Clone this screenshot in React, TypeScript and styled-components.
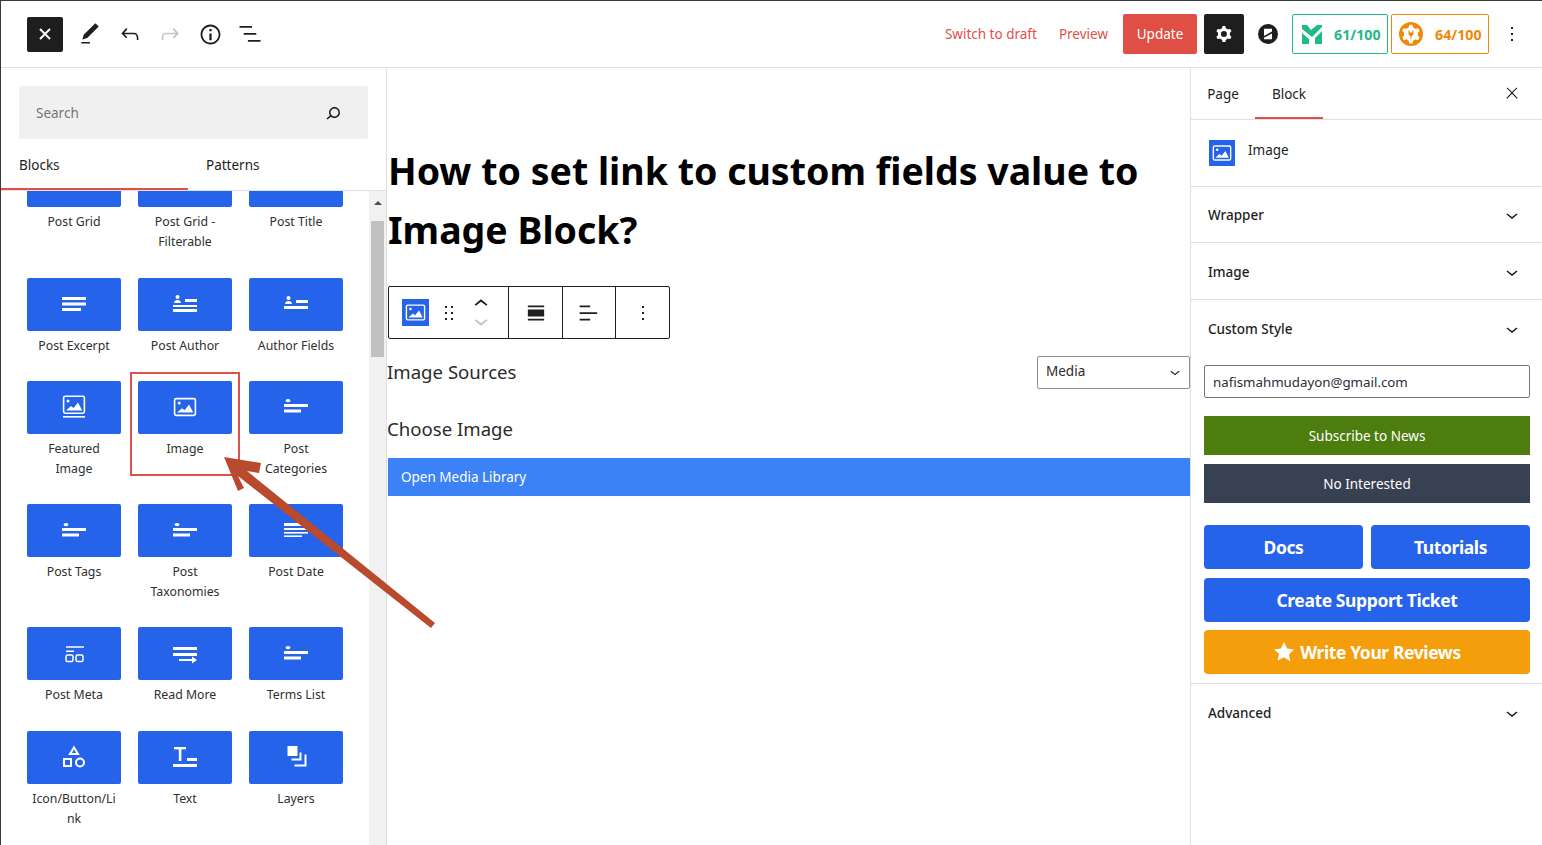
import React from 'react';
import styled, { createGlobalStyle } from 'styled-components';

const GlobalStyle = createGlobalStyle`
  html, body {
    margin: 0;
    padding: 0;
    background: #fff;
  }
  * {
    box-sizing: border-box;
  }
  body {
    font-family: "Noto Sans", "Open Sans", sans-serif;
    font-size: 13px;
    color: #1e1e1e;
  }
`;

const Page = styled.div`
  position: relative;
  width: 1542px;
  height: 845px;
  overflow: hidden;
  display: flex;
  flex-direction: column;
  border-top: 1px solid #343a40;
  border-left: 1px solid #343a40;
`;

const TopBar = styled.header`
  flex: 0 0 67px;
  display: flex;
  align-items: center;
  justify-content: space-between;
  padding: 0 18px 0 26px;
  border-bottom: 1px solid #e0e0e0;
`;

const TopGroup = styled.div`
  display: flex;
  align-items: center;
`;

const CloseButton = styled.div`
  width: 36px;
  height: 35px;
  border-radius: 2px;
  background: #1e1e1e;
  color: #fff;
  display: flex;
  align-items: center;
  justify-content: center;
  margin-right: 7px;
`;

const ToolIcon = styled.div<{ $muted?: boolean }>`
  width: 40px;
  height: 36px;
  display: flex;
  align-items: center;
  justify-content: center;
  color: ${({ $muted }) => ($muted ? '#c4c4c4' : '#1e1e1e')};
`;

const TextLink = styled.span<{ $gap: number }>`
  font-size: 13.5px;
  color: #e0504a;
  margin-right: ${({ $gap }) => $gap}px;
`;

const UpdateButton = styled.div`
  width: 74px;
  height: 40px;
  border-radius: 2px;
  background: #e04f45;
  color: #fff;
  font-size: 13.5px;
  display: flex;
  align-items: center;
  justify-content: center;
  margin-right: 7px;
`;

const GearButton = styled.div`
  width: 40px;
  height: 40px;
  border-radius: 2px;
  background: #1e1e1e;
  color: #fff;
  display: flex;
  align-items: center;
  justify-content: center;
  margin-right: 14px;
`;

const LogoSlot = styled.div`
  width: 20px;
  height: 20px;
  margin-right: 14px;
  display: flex;
`;

const ScoreBox = styled.div<{ $color: string; $width: number; $left: number }>`
  width: ${({ $width }) => $width}px;
  height: 40px;
  border: 1px solid ${({ $color }) => $color};
  border-radius: 2px;
  color: ${({ $color }) => $color};
  font-size: 14.2px;
  font-weight: 700;
  display: flex;
  align-items: center;
  justify-content: space-between;
  padding: 0 6.5px 0 ${({ $left }) => $left}px;
  margin-right: 3px;
`;

const KebabSlot = styled.div`
  width: 24px;
  height: 24px;
  margin-left: 8px;
  color: #1e1e1e;
`;

const Body = styled.div`
  flex: 1;
  min-height: 0;
  display: flex;
`;

const Inserter = styled.aside`
  flex: 0 0 386px;
  display: flex;
  flex-direction: column;
  border-right: 1px solid #e0e0e0;
  min-height: 0;
`;

const SearchBox = styled.div`
  height: 53px;
  margin: 18px 18px 0 18px;
  padding: 0 23px 0 17px;
  border-radius: 2px;
  background: #f0f0f0;
  font-size: 13.5px;
  display: flex;
  align-items: center;
  justify-content: space-between;
  color: #1e1e1e;
`;

const Placeholder = styled.span`
  color: #757575;
`;

const InserterTabs = styled.div`
  flex: 0 0 52px;
  display: flex;
  border-bottom: 1px solid #e0e0e0;
`;

const InserterTab = styled.div<{ $active?: boolean }>`
  width: 187px;
  height: 51px;
  padding: 2px 18px 0;
  font-size: 13.5px;
  display: flex;
  align-items: center;
  border-bottom: 2px solid ${({ $active }) => ($active ? '#e0504a' : 'transparent')};
`;

const ScrollArea = styled.div`
  flex: 1;
  min-height: 0;
  display: flex;
  overflow: hidden;
`;

const BlockGrid = styled.div`
  flex: 1;
  display: grid;
  grid-template-columns: repeat(3, 94px);
  column-gap: 17px;
  row-gap: 25.3px;
  align-content: start;
  padding-left: 26px;
  margin-top: -36.75px;
`;

const BlockItem = styled.div`
  text-align: center;
  font-size: 12.3px;
  line-height: 20px;
  color: #2f2f2f;
  overflow-wrap: anywhere;
  padding: 0 4px;
`;

const BlockTile = styled.div`
  height: 53px;
  margin: 0 -4px 5px;
  border-radius: 2px;
  background: #2563eb;
  color: #fff;
  display: flex;
  align-items: center;
  justify-content: center;
`;

const ScrollTrack = styled.div`
  flex: 0 0 17px;
  background: #f1f1f1;
  padding: 0 2px;
`;

const ScrollArrow = styled.div`
  height: 17px;
  margin-top: 3px;
  display: flex;
  justify-content: center;
  align-items: center;
  &::before {
    content: '';
    border: 4px solid transparent;
    border-top: 0;
    border-bottom: 4px solid #505050;
  }
`;

const ScrollThumb = styled.div`
  height: 136px;
  margin-top: 10px;
  background: #c1c1c1;
`;

const Canvas = styled.main`
  flex: 1;
  min-width: 0;
  padding-top: 73px;
  display: flex;
  flex-direction: column;
  align-items: stretch;
  padding-left: 1px;
`;

const Title = styled.h1`
  margin: 0 0 27px;
  padding-right: 40px;
  font-size: 37.5px;
  font-weight: 700;
  line-height: 59px;
  color: #000;
`;

const BlockToolbar = styled.div`
  width: 282px;
  height: 53px;
  display: flex;
  border: 1px solid #1e1e1e;
  border-radius: 2px;
  margin-bottom: 17px;
`;

const ToolbarGroup = styled.div<{ $width: number }>`
  width: ${({ $width }) => $width}px;
  display: flex;
  align-items: center;
  justify-content: center;
  border-right: 1px solid #1e1e1e;
  &:last-child {
    border-right: 0;
  }
`;

const ImageTools = styled.div`
  width: 120px;
  padding-left: 13px;
  display: flex;
  align-items: center;
  gap: 8px;
  border-right: 1px solid #1e1e1e;
`;

const ImageChip = styled.div<{ $size: number }>`
  width: ${({ $size }) => $size}px;
  height: ${({ $size }) => $size}px;
  background: #2563eb;
  color: #fff;
  display: flex;
  align-items: center;
  justify-content: center;
  flex: none;
`;

const MoverStack = styled.div`
  display: flex;
  flex-direction: column;
  margin-left: -2px;
`;

const MoverIcon = styled.div<{ $muted?: boolean }>`
  height: 17px;
  display: flex;
  align-items: center;
  justify-content: center;
  color: ${({ $muted }) => ($muted ? '#c4c4c4' : '#1e1e1e')};
`;

const FieldRow = styled.div`
  display: flex;
  align-items: center;
  justify-content: space-between;
  height: 33px;
  font-size: 18.6px;
  line-height: 31px;
  color: #2b2b2b;
  margin-left: -1px;
`;

const FieldText = styled.span`
  padding-bottom: 2px;
`;

const SelectBox = styled.div`
  width: 153px;
  height: 33px;
  border: 1px solid #8c8f94;
  border-radius: 2px;
  padding: 0 4px 2px 8px;
  font-size: 13.5px;
  display: flex;
  align-items: center;
  justify-content: space-between;
`;

const FieldLabel = styled.div`
  font-size: 18.6px;
  line-height: 33px;
  margin: 23px 0 0 -1px;
  color: #2b2b2b;
`;

const MediaButton = styled.div`
  height: 38px;
  margin-top: 13px;
  padding-left: 13px;
  background: #3b82f6;
  color: #fff;
  font-size: 13.5px;
  display: flex;
  align-items: center;
`;

const Sidebar = styled.aside`
  flex: 0 0 352px;
  border-left: 1px solid #e0e0e0;
  display: flex;
  flex-direction: column;
`;

const SideTabs = styled.div`
  flex: 0 0 51px;
  display: flex;
  align-items: stretch;
  border-bottom: 1px solid #e0e0e0;
`;

const SideTab = styled.div<{ $active?: boolean; $width: number }>`
  width: ${({ $width }) => $width}px;
  height: 51px;
  font-size: 13.5px;
  padding-top: 2px;
  display: flex;
  align-items: center;
  justify-content: center;
  border-bottom: 2px solid ${({ $active }) => ($active ? '#e0504a' : 'transparent')};
`;

const SideClose = styled.div`
  margin-left: auto;
  margin-right: 21px;
  height: 50px;
  display: flex;
  align-items: center;
`;

const BlockCard = styled.div`
  height: 67px;
  padding: 20px 18px 0;
  display: flex;
  align-items: flex-start;
  gap: 13px;
  font-size: 13.5px;
  line-height: 20px;
  border-bottom: 1px solid #e0e0e0;
`;

const Panel = styled.div<{ $height: number; $open?: boolean }>`
  height: ${({ $height }) => $height}px;
  padding: 1px 18px 0 17px;
  display: flex;
  align-items: center;
  justify-content: space-between;
  font-size: 13.5px;
  font-weight: 500;
  border-bottom: ${({ $open }) => ($open ? '0' : '1px solid #e0e0e0')};
`;

const CustomStyle = styled.div`
  padding: 8px 12px 9px 13px;
  display: flex;
  flex-direction: column;
  border-bottom: 1px solid #e0e0e0;
`;

const EmailInput = styled.div`
  height: 33px;
  border: 1px solid #767676;
  border-radius: 2px;
  padding: 0 8px;
  font-size: 13.3px;
  color: #2c2c3a;
  display: flex;
  align-items: center;
  margin-bottom: 18px;
`;

const FlatButton = styled.div<{ $bg: string; $gap: number }>`
  height: 39px;
  background: ${({ $bg }) => $bg};
  color: #fff;
  font-size: 13.5px;
  display: flex;
  align-items: center;
  justify-content: center;
  margin-bottom: ${({ $gap }) => $gap}px;
`;

const LinkRow = styled.div`
  display: grid;
  grid-template-columns: 1fr 1fr;
  column-gap: 8px;
  margin-bottom: 9px;
`;

const LinkButton = styled.div<{ $bg: string; $gap?: number }>`
  height: 44px;
  border-radius: 4px;
  background: ${({ $bg }) => $bg};
  color: #fff;
  font-size: 17.5px;
  font-weight: 700;
  letter-spacing: -0.4px;
  display: flex;
  align-items: center;
  justify-content: center;
  gap: 5px;
  margin-bottom: ${({ $gap }) => $gap ?? 0}px;
`;

const HighlightBox = styled.div`
  position: absolute;
  left: 129px;
  top: 371px;
  width: 110px;
  height: 104px;
  border: 2px solid #e0504a;
  pointer-events: none;
`;

const EdgeMark = styled.div<{ $top: number; $height: number; $color: string }>`
  position: absolute;
  left: -1px;
  top: ${({ $top }) => $top}px;
  width: 1px;
  height: ${({ $height }) => $height}px;
  background: ${({ $color }) => $color};
`;

const ArrowOverlay = styled.svg`
  position: absolute;
  left: -1px;
  top: -1px;
  width: 1542px;
  height: 845px;
  pointer-events: none;
`;

type IconProps = { size?: number };

const WpIcon: React.FC<IconProps & { d: string; evenOdd?: boolean }> = ({ d, size = 24, evenOdd }) => (
  <svg width={size} height={size} viewBox="0 0 24 24" fill="currentColor">
    <path d={d} fillRule={evenOdd ? 'evenodd' : undefined} clipRule={evenOdd ? 'evenodd' : undefined} />
  </svg>
);

const paths = {
  close: 'M13 11.8l6.1-6.3-1-1-6.1 6.2-6.1-6.2-1 1 6.1 6.3-6.5 6.7 1 1 6.5-6.6 6.5 6.6 1-1z',
  pen: 'M20.1 5.1L16.9 2 6.2 12.7l-1.3 4.4 4.5-1.3L20.1 5.1zM4 20.8h8v-1.5H4v1.5z',
  undo: 'M18.3 11.7c-.6-.6-1.4-.9-2.3-.9H6.7l2.9-3.3-1.1-1-4.5 5L8.5 16l1-1-2.7-2.7H16c.5 0 .9.2 1.3.5 1 1 1 3.4 1 4.5v.3h1.5v-.2c0-1.5 0-4.3-1.5-5.7z',
  redo: 'M15.6 6.5l-1.1 1 2.9 3.3H8c-.9 0-1.7.3-2.3.9-1.4 1.5-1.4 4.2-1.4 5.6v.2h1.5v-.3c0-1.1 0-3.5 1-4.5.3-.3.7-.5 1.3-.5h9.2L14.5 15l1.1 1.1 4.6-4.6-4.6-5z',
  info: 'M12 3.2c-4.8 0-8.8 3.9-8.8 8.8 0 4.8 3.9 8.8 8.8 8.8 4.8 0 8.8-3.9 8.8-8.8 0-4.8-4-8.8-8.8-8.8zm0 16c-4 0-7.2-3.3-7.2-7.2C4.8 8 8 4.8 12 4.8s7.2 3.3 7.2 7.2c0 4-3.2 7.2-7.2 7.2zM11 17h2v-6h-2v6zm0-8h2V7h-2v2z',
  list: 'M13.8 5.2H3v1.5h10.8V5.2zm-3.6 12v1.5H21v-1.5H10.2zm7.2-6H6.6v1.5h10.8v-1.5z',
  search: 'M13.5 6C10.5 6 8 8.5 8 11.5c0 1.1.3 2.1.9 3l-3.4 3 1 1.1 3.4-2.9c1 .9 2.2 1.4 3.6 1.4 3 0 5.5-2.5 5.5-5.5C19 8.5 16.5 6 13.5 6zm0 9.5c-2.2 0-4-1.8-4-4s1.8-4 4-4 4 1.8 4 4-1.8 4-4 4z',
  kebab: 'M13 19h-2v-2h2v2zm0-6h-2v-2h2v2zm0-6h-2V5h2v2z',
  cog: 'M10.289 4.836A1 1 0 0111.275 4h1.306a1 1 0 01.987.836l.244 1.466c.787.26 1.503.679 2.108 1.218l1.393-.522a1 1 0 011.216.437l.653 1.13a1 1 0 01-.23 1.273l-1.148.944a6.025 6.025 0 010 2.435l1.149.946a1 1 0 01.23 1.272l-.653 1.13a1 1 0 01-1.216.437l-1.394-.522c-.605.54-1.32.958-2.108 1.218l-.244 1.466a1 1 0 01-.987.836h-1.306a1 1 0 01-.986-.836l-.244-1.466a5.995 5.995 0 01-2.108-1.218l-1.394.522a1 1 0 01-1.217-.436l-.653-1.131a1 1 0 01.23-1.272l1.149-.946a6.026 6.026 0 010-2.435l-1.148-.944a1 1 0 01-.23-1.272l.653-1.131a1 1 0 011.217-.437l1.393.522a5.994 5.994 0 012.108-1.218l.244-1.466zM14.929 12a3 3 0 11-6 0 3 3 0 016 0z',
  down: 'M17.5 11.6L12 16l-5.5-4.4.9-1.2L12 14l4.5-3.6 1 1.2z',
  up: 'M6.5 12.4L12 8l5.5 4.4-.9 1.2L12 10l-4.5 3.6-1-1.2z',
  drag: 'M8 7h2V5H8v2zm0 6h2v-2H8v2zm0 6h2v-2H8v2zm6-14v2h2V5h-2zm0 8h2v-2h-2v2zm0 6h2v-2h-2v2z',
  alignWide: 'M5 5.5h14V7H5V5.5zm0 11.5h14v1.5H5V17zm0-8h14v6H5V9z',
  alignLeft: 'M4 5.5h9V7H4V5.5zm0 5.75h15v1.5H4v-1.5zM4 17h9v1.5H4V17z',
};

const BoldCross = () => (
  <svg width="12" height="12" viewBox="0 0 12 12" fill="none" stroke="currentColor" strokeWidth="2">
    <path d="M1 1l10 10M11 1L1 11" />
  </svg>
);

// picture icon in the outlined style used by the block tiles
const PictureIcon: React.FC<IconProps> = ({ size = 24 }) => (
  <svg width={size} height={size} viewBox="0 0 24 24" fill="none">
    <rect x="1.6" y="3.6" width="20.8" height="16.8" rx="1.6" stroke="currentColor" strokeWidth="1.6" />
    <circle cx="6.2" cy="8" r="1.5" fill="currentColor" />
    <path d="M4 17.6l5-4.4 2.6 2 4.4-5.6 4.2 8z" fill="currentColor" />
  </svg>
);

const TileSvg: React.FC<{ children: React.ReactNode }> = ({ children }) => (
  <svg width="24" height="24" viewBox="0 0 24 24" fill="currentColor">
    {children}
  </svg>
);

const Bars: React.FC<{ rows: [number, number, number, number?][] }> = ({ rows }) => (
  <>
    {rows.map(([x, y, w, h = 2], i) => (
      <rect key={i} x={x} y={y} width={w} height={h} />
    ))}
  </>
);

const tileIcons: Record<string, React.ReactNode> = {
  excerpt: <TileSvg><Bars rows={[[0, 5, 24, 3], [0, 10.5, 24, 3], [0, 16, 19, 3]]} /></TileSvg>,
  author: (
    <TileSvg>
      <circle cx="4.5" cy="5" r="2" />
      <path d="M1 11c0-2 1.6-3 3.5-3S8 9 8 11z" />
      <Bars rows={[[12, 7, 12, 3], [0, 13, 24, 2], [0, 17, 24, 3]]} />
    </TileSvg>
  ),
  authorFields: (
    <TileSvg>
      <circle cx="4.5" cy="6" r="2" />
      <path d="M1 12c0-2 1.6-3 3.5-3S8 10 8 12z" />
      <Bars rows={[[12, 8, 12, 3], [0, 14, 24, 3]]} />
    </TileSvg>
  ),
  featured: (
    <svg width="24" height="24" viewBox="0 0 24 24" fill="none">
      <rect x="1.6" y="1.2" width="20.8" height="17" rx="1.6" stroke="currentColor" strokeWidth="1.6" />
      <circle cx="6" cy="6" r="1.5" fill="currentColor" />
      <path d="M4 15.4l5-4.4 2.6 2 4.4-5.6 4.2 8z" fill="currentColor" />
      <rect x="1" y="21" width="22" height="1.6" fill="currentColor" />
    </svg>
  ),
  image: <PictureIcon />,
  terms: (
    <TileSvg>
      <ellipse cx="4" cy="5.6" rx="2.5" ry="1.7" />
      <Bars rows={[[0, 9, 24, 3], [0, 14.5, 17, 3]]} />
    </TileSvg>
  ),
  date: (
    <TileSvg>
      <Bars rows={[[0, 4, 18, 3], [0, 9, 24, 2], [0, 13, 24, 1.6], [0, 16.4, 18, 1.6]]} />
    </TileSvg>
  ),
  meta: (
    <svg width="24" height="24" viewBox="0 0 24 24" fill="none" stroke="currentColor">
      <path d="M4 5h18M4 9.2h8" strokeWidth="1.4" />
      <rect x="4" y="13" width="7" height="6.5" rx="1.6" strokeWidth="1.5" />
      <rect x="14" y="13" width="7" height="6.5" rx="1.6" strokeWidth="1.5" />
    </svg>
  ),
  readMore: (
    <TileSvg>
      <Bars rows={[[0, 5, 24, 3], [0, 11, 24, 3], [6, 17, 15, 2]]} />
      <path d="M19 14.5l5 3.5-5 3.5z" />
    </TileSvg>
  ),
  shapes: (
    <svg width="24" height="24" viewBox="0 0 24 24" fill="none" stroke="currentColor" strokeWidth="2">
      <path d="M12 2.5l4 6.5H8z" />
      <rect x="2" y="14" width="7" height="7" />
      <circle cx="18" cy="17.5" r="4" />
    </svg>
  ),
  text: (
    <TileSvg>
      <Bars rows={[[1, 2, 12, 2.4], [5.8, 2, 2.6, 14], [14, 13, 10, 3], [0, 19, 24, 3]]} />
    </TileSvg>
  ),
  layers: (
    <svg width="24" height="24" viewBox="0 0 24 24" fill="none">
      <rect x="3.5" y="1" width="10" height="10" fill="currentColor" />
      <path d="M16.5 7.5v7h-9" stroke="currentColor" strokeWidth="2" />
      <path d="M21.5 9.5v11h-11" stroke="currentColor" strokeWidth="2" />
    </svg>
  ),
};

const blocks: { label: string; icon: keyof typeof tileIcons }[] = [
  { label: 'Post Grid', icon: 'excerpt' },
  { label: 'Post Grid - Filterable', icon: 'excerpt' },
  { label: 'Post Title', icon: 'excerpt' },
  { label: 'Post Excerpt', icon: 'excerpt' },
  { label: 'Post Author', icon: 'author' },
  { label: 'Author Fields', icon: 'authorFields' },
  { label: 'Featured Image', icon: 'featured' },
  { label: 'Image', icon: 'image' },
  { label: 'Post Categories', icon: 'terms' },
  { label: 'Post Tags', icon: 'terms' },
  { label: 'Post Taxonomies', icon: 'terms' },
  { label: 'Post Date', icon: 'date' },
  { label: 'Post Meta', icon: 'meta' },
  { label: 'Read More', icon: 'readMore' },
  { label: 'Terms List', icon: 'terms' },
  { label: 'Icon/Button/Link', icon: 'shapes' },
  { label: 'Text', icon: 'text' },
  { label: 'Layers', icon: 'layers' },
];

const BrandLogo = () => (
  <svg width="20" height="20" viewBox="0 0 20 20" fill="#fff">
    <circle cx="10" cy="10" r="10" fill="#1e1e1e" />
    <path d="M6 4.8h8v2.6L6 12z" />
    <path d="M14 9.5v5.7H6v-1.4z" />
  </svg>
);

const MonsterLogo = () => (
  <svg width="20" height="19" viewBox="0 0 20 19" fill="#1fb98a">
    <path d="M0 0h5l4 5 6-5h5v2L10 12 0 4z" />
    <path d="M0 8l7 6v5H0zM20 6v13h-7v-6z" />
  </svg>
);

const PluginLogo = () => (
  <svg width="24" height="24" viewBox="0 0 24 24">
    <circle cx="12" cy="12" r="12" fill="#f28705" />
    <path d={paths.cog} fill="#fff" transform="translate(-1.9 -1.8) scale(1.16)" />
    <circle cx="12" cy="12" r="5" fill="#fff" />
    <path d="M9.5 8.5v3c0 1.5 1 2.4 2 2.5v3h1v-3c1-.1 2-1 2-2.5v-3h-1.2v2h-2.6v-2z" fill="#f28705" />
  </svg>
);

const App: React.FC = () => {
  return (
    <>
      <GlobalStyle />
      <Page>
        <TopBar>
          <TopGroup>
            <CloseButton>
              <BoldCross />
            </CloseButton>
            <ToolIcon><WpIcon d={paths.pen} size={26} /></ToolIcon>
            <ToolIcon><WpIcon d={paths.undo} size={26} /></ToolIcon>
            <ToolIcon $muted><WpIcon d={paths.redo} size={26} /></ToolIcon>
            <ToolIcon><WpIcon d={paths.info} size={27} /></ToolIcon>
            <ToolIcon><WpIcon d={paths.list} size={28} /></ToolIcon>
          </TopGroup>
          <TopGroup>
            <TextLink $gap={22}>Switch to draft</TextLink>
            <TextLink $gap={15}>Preview</TextLink>
            <UpdateButton>Update</UpdateButton>
            <GearButton><WpIcon d={paths.cog} evenOdd /></GearButton>
            <LogoSlot><BrandLogo /></LogoSlot>
            <ScoreBox $color="#1fb98a" $width={96} $left={9}>
              <MonsterLogo />
              <span>61/100</span>
            </ScoreBox>
            <ScoreBox $color="#f28705" $width={98} $left={7}>
              <PluginLogo />
              <span>64/100</span>
            </ScoreBox>
            <KebabSlot><WpIcon d={paths.kebab} /></KebabSlot>
          </TopGroup>
        </TopBar>
        <Body>
          <Inserter>
            <SearchBox>
              <Placeholder>Search</Placeholder>
              <WpIcon d={paths.search} />
            </SearchBox>
            <InserterTabs>
              <InserterTab $active>Blocks</InserterTab>
              <InserterTab>Patterns</InserterTab>
            </InserterTabs>
            <ScrollArea>
              <BlockGrid>
                {blocks.map((block) => (
                  <BlockItem key={block.label}>
                    <BlockTile>{tileIcons[block.icon]}</BlockTile>
                    {block.label}
                  </BlockItem>
                ))}
              </BlockGrid>
              <ScrollTrack>
                <ScrollArrow />
                <ScrollThumb />
              </ScrollTrack>
            </ScrollArea>
          </Inserter>
          <Canvas>
            <Title>How to set link to custom fields value to Image Block?</Title>
            <BlockToolbar>
              <ImageTools>
                <ImageChip $size={27}><PictureIcon size={21} /></ImageChip>
                <WpIcon d={paths.drag} />
                <MoverStack>
                  <MoverIcon><WpIcon d={paths.up} size={28} /></MoverIcon>
                  <MoverIcon $muted><WpIcon d={paths.down} size={28} /></MoverIcon>
                </MoverStack>
              </ImageTools>
              <ToolbarGroup $width={54}><WpIcon d={paths.alignWide} size={28} /></ToolbarGroup>
              <ToolbarGroup $width={53}><WpIcon d={paths.alignLeft} size={28} /></ToolbarGroup>
              <ToolbarGroup $width={53}><WpIcon d={paths.kebab} /></ToolbarGroup>
            </BlockToolbar>
            <FieldRow>
              <FieldText>Image Sources</FieldText>
              <SelectBox>
                <span>Media</span>
                <WpIcon d={paths.down} size={20} />
              </SelectBox>
            </FieldRow>
            <FieldLabel>Choose Image</FieldLabel>
            <MediaButton>Open Media Library</MediaButton>
          </Canvas>
          <Sidebar>
            <SideTabs>
              <SideTab $width={64}>Page</SideTab>
              <SideTab $width={68} $active>Block</SideTab>
              <SideClose><WpIcon d={paths.close} size={18} /></SideClose>
            </SideTabs>
            <BlockCard>
              <ImageChip $size={26}><PictureIcon size={20} /></ImageChip>
              <span>Image</span>
            </BlockCard>
            <Panel $height={56}>Wrapper<WpIcon d={paths.down} /></Panel>
            <Panel $height={57}>Image<WpIcon d={paths.down} /></Panel>
            <Panel $height={57} $open>Custom Style<WpIcon d={paths.down} /></Panel>
            <CustomStyle>
              <EmailInput>nafismahmudayon@gmail.com</EmailInput>
              <FlatButton $bg="#4d7c0f" $gap={9}>Subscribe to News</FlatButton>
              <FlatButton $bg="#374151" $gap={22}>No Interested</FlatButton>
              <LinkRow>
                <LinkButton $bg="#2563eb">Docs</LinkButton>
                <LinkButton $bg="#2563eb">Tutorials</LinkButton>
              </LinkRow>
              <LinkButton $bg="#2563eb" $gap={8}>Create Support Ticket</LinkButton>
              <LinkButton $bg="#f59e0b">
                <svg width="22" height="22" viewBox="0 0 24 24" fill="currentColor">
                  <path d="M12 1l3.4 7.2 7.6 1-5.6 5.4 1.5 7.8L12 17.6l-6.9 3.8 1.5-7.8L1 9.2l7.6-1z" />
                </svg>
                Write Your Reviews
              </LinkButton>
            </CustomStyle>
            <Panel $height={56} $open>Advanced<WpIcon d={paths.down} /></Panel>
          </Sidebar>
        </Body>
        <EdgeMark $top={214} $height={10} $color="#f0504a" />
        <EdgeMark $top={224} $height={15} $color="#fff" />
        <EdgeMark $top={239} $height={12} $color="#f0504a" />
        <HighlightBox />
        <ArrowOverlay viewBox="0 0 1542 845">
          <path d="M224 457L261 463L259 473L247 471L435 623L431 628L238 476L244 488L238 491z" fill="#b94a2e" />
        </ArrowOverlay>
      </Page>
    </>
  );
};

export default App;
